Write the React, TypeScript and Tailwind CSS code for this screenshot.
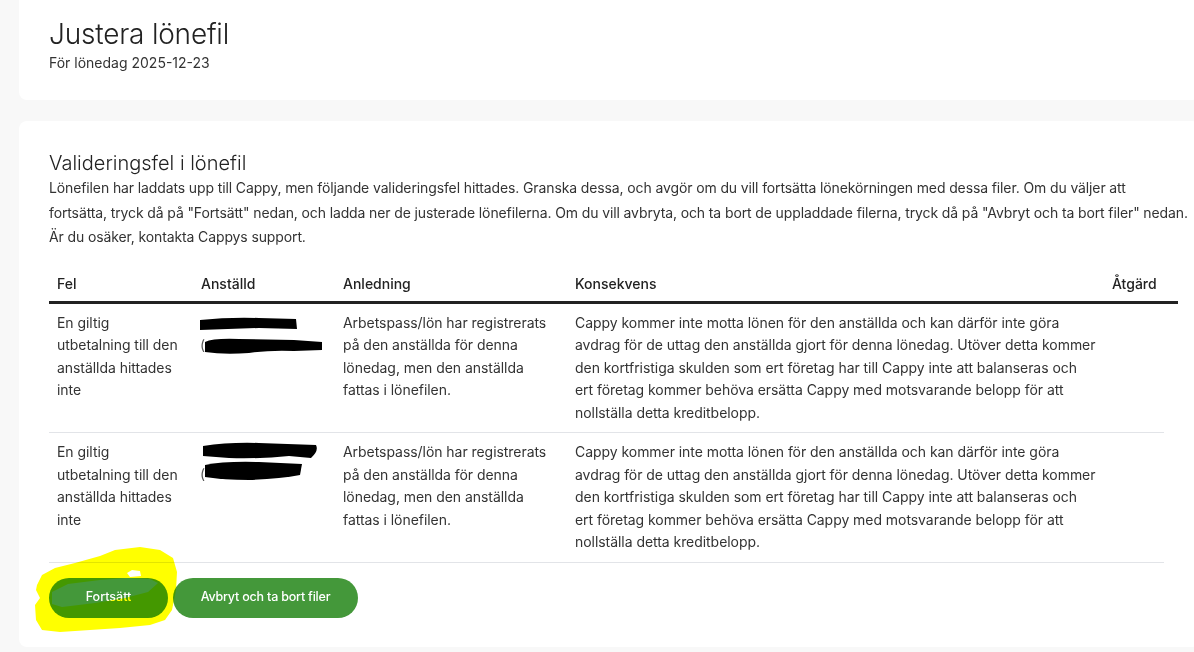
import React from "react";

type Row = {
  fel: string[];
  anledning: string[];
  konsekvens: string[];
};

const KONSEKVENS = [
  "Cappy kommer inte motta lönen för den anställda och kan därför inte göra",
  "avdrag för de uttag den anställda gjort för denna lönedag. Utöver detta kommer",
  "den kortfristiga skulden som ert företag har till Cappy inte att balanseras och",
  "ert företag kommer behöva ersätta Cappy med motsvarande belopp för att",
  "nollställa detta kreditbelopp.",
];

const rows: Row[] = [
  {
    fel: ["En giltig", "utbetalning till den", "anställda hittades", "inte"],
    anledning: ["Arbetspass/lön har registrerats", "på den anställda för denna", "lönedag, men den anställda", "fattas i lönefilen."],
    konsekvens: KONSEKVENS,
  },
  {
    fel: ["En giltig", "utbetalning till den", "anställda hittades", "inte"],
    anledning: ["Arbetspass/lön har registrerats", "på den anställda för denna", "lönedag, men den anställda", "fattas i lönefilen."],
    konsekvens: KONSEKVENS,
  },
];

function Lines({ lines }: { lines: string[] }) {
  return (
    <>
      {lines.map((l, i) => (
        <div key={i} className="whitespace-nowrap">
          {l}
        </div>
      ))}
    </>
  );
}

// redacted employee names, drawn as marker blobs
function Redacted({ variant }: { variant: 0 | 1 }) {
  return (
    <div className="relative h-[45px] w-[130px]">
      <span className="absolute left-[-1px] top-[22px] text-[#555]">(</span>
      <svg className="absolute left-[-2px] top-0" width="132" height="45" viewBox="0 0 132 45">
        {variant === 0 ? (
          <>
            <path d="M1 8 Q30 5 60 6 L97 7 L98 17 L60 16 Q30 17 1 18 Z" fill="#000" />
            <path d="M6 30 Q14 26 40 27 L95 28 L123 30 L123 38 L95 39 Q70 38 50 41 Q25 43 6 40 Z" fill="#000" />
          </>
        ) : (
          <>
            <path d="M4 5 Q30 1 60 2 L117 4 Q120 10 112 17 L90 15 Q60 18 30 17 L4 15 Z" fill="#000" />
            <path d="M6 24 Q25 20 60 21 L103 23 L101 34 Q80 38 50 39 Q25 39 6 36 Z" fill="#000" />
          </>
        )}
      </svg>
    </div>
  );
}

export default function App() {
  return (
    <div
      className="relative h-[652px] w-[1194px] overflow-hidden bg-[#f8f8f8] text-[#2b2b2b]"
      style={{ fontFamily: "Inter, 'Liberation Sans', sans-serif" }}
    >
      <div className="flex w-[1200px] flex-col gap-[21px] pl-[19px]">
        {/* header card */}
        <div className="h-[100px] rounded-b-lg bg-white px-[30px] pt-[16px]">
          <h1 className="text-[28px] font-light leading-[37px] tracking-[-0.2px] text-[#222]">Justera lönefil</h1>
          <p className="text-[14px] leading-[20px] text-[#333]">För lönedag 2025-12-23</p>
        </div>

        {/* validation card */}
        <div className="h-[526px] rounded-lg bg-white px-[30px] pt-[29px]">
          <h2 className="text-[20px] font-light leading-[26px] text-[#222]">Valideringsfel i lönefil</h2>
          <p className="text-[14px] leading-[24.5px] tracking-[-0.12px] text-[#333]">
            <span className="block whitespace-nowrap">
              Lönefilen har laddats upp till Cappy, men följande valideringsfel hittades. Granska dessa, och avgör om du vill fortsätta lönekörningen med dessa filer. Om du väljer att
            </span>
            <span className="block whitespace-nowrap">
              fortsätta, tryck då på "Fortsätt" nedan, och ladda ner de justerade lönefilerna. Om du vill avbryta, och ta bort de uppladdade filerna, tryck då på "Avbryt och ta bort filer" nedan.
            </span>
            <span className="block whitespace-nowrap">Är du osäker, kontakta Cappys support.</span>
          </p>

          <div className="mt-[23px] w-[1129px]">
            <div className="grid grid-cols-[144px_142px_232px_537px_74px] border-b-[3px] border-[#222] pb-[6px] text-[14px] font-medium leading-[22px] text-[#222]">
              <div className="px-2">Fel</div>
              <div className="px-2">Anställd</div>
              <div className="px-2">Anledning</div>
              <div className="px-2">Konsekvens</div>
              <div className="px-2">Åtgärd</div>
            </div>
            {rows.map((r, i) => (
              <div
                key={i}
                className="grid w-[1115px] grid-cols-[144px_142px_232px_537px_60px] border-b border-[#e2e4e8] py-2 text-[14px] leading-[22.5px] tracking-[-0.05px] text-[#333]"
              >
                <div className="px-2">
                  <Lines lines={r.fel} />
                </div>
                <div className="px-2">
                  <Redacted variant={i === 0 ? 0 : 1} />
                </div>
                <div className="px-2">
                  <Lines lines={r.anledning} />
                </div>
                <div className="px-2">
                  <Lines lines={r.konsekvens} />
                </div>
                <div className="px-2" />
              </div>
            ))}
          </div>

          <div className="mt-[15px] flex gap-[5px]">
            <button className="h-[40px] w-[119px] rounded-full bg-[#44983a] text-[12.5px] font-medium text-white">
              Fortsätt
            </button>
            <button className="h-[40px] w-[185px] rounded-full bg-[#44983a] text-[12.5px] font-medium tracking-[-0.2px] text-white">
              Avbryt och ta bort filer
            </button>
          </div>
        </div>
      </div>

      {/* yellow highlighter annotation over the first button */}
      <svg
        className="pointer-events-none absolute left-0 top-0 mix-blend-multiply"
        width="1194"
        height="652"
        viewBox="0 0 1194 652"
      >
        <path
          fillRule="evenodd"
          fill="#ffff00"
          d="M37 585 L42 575 L55 568 L75 563 L100 556 L115 550 L140 547 L160 550 L173 558 L177 572 L176 590 L172 610 L165 620 L150 625 L120 628 L90 630 L60 632 L42 630 L36 620 L35 605 L40 598 L36 590 Z
             M52 592 L68 584 L100 580 L126 578 L150 579 L158 583 L148 592 L125 598 L95 603 L62 607 L52 604 Z
             M127 573 L132 570 L140 571 L141 576 L130 577 Z"
        />
      </svg>
    </div>
  );
}
